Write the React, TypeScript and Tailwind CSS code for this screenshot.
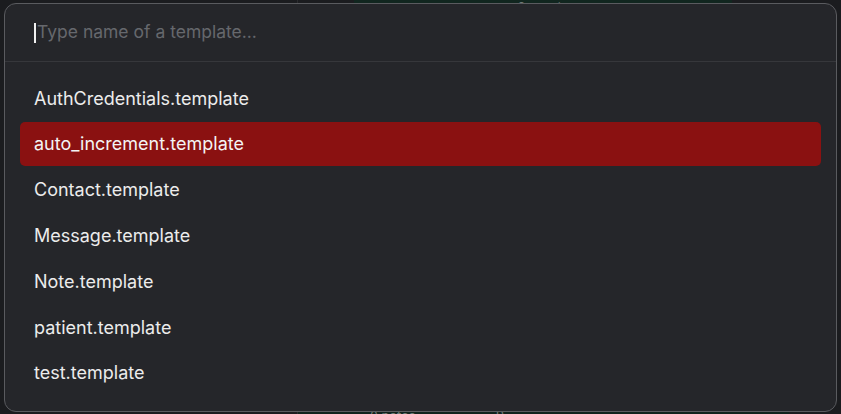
const templates = [
  "AuthCredentials.template",
  "auto_increment.template",
  "Contact.template",
  "Message.template",
  "Note.template",
  "patient.template",
  "test.template",
];

const activeIndex = 1;

export default function App() {
  return (
    <div
      className="relative h-[414px] w-[841px] overflow-hidden bg-[#1b1c1f]"
      style={{ fontFamily: "Inter, 'Noto Sans', sans-serif" }}
    >
      {/* page behind the dialog, mostly covered */}
      <div className="flex h-full">
        <div className="w-[298px] border-r border-[#2a2b2e]" />
        <div className="flex flex-1 flex-col justify-between">
          <div className="ml-[56px] flex h-[8px] w-[378px] items-end justify-center bg-[#11261f] text-[13px] leading-none text-[#6f7a76]">
            <span className="-mb-[6px]">2 assets</span>
          </div>
          <div className="flex h-[8px] w-[491px] items-start gap-[80px] bg-[#10231d] pl-[72px] text-[13px] leading-none text-[#6f7a76]">
            <span className="mt-[4px]">2 notes</span>
            <span className="mt-[4px]">B</span>
          </div>
        </div>
      </div>

      <div className="absolute left-[4px] top-[3px] flex h-[409px] w-[833px] flex-col rounded-[12px] border border-[#5a5b5f] bg-[#25262a]">
        <div className="flex h-[58px] items-center border-b border-[#36373b] px-[29px]">
          <span className="mr-[1px] h-[20px] w-[2px] bg-[#f0f0f0]" />
          <span className="text-[17.5px] text-[#66686d]">Type name of a template...</span>
        </div>
        <ul className="flex flex-col gap-[1.4px] px-[15px] pt-[14px]">
          {templates.map((name, i) => (
            <li
              key={name}
              className={
                i === activeIndex
                  ? "flex h-[44.4px] items-center rounded-[5px] bg-[#8a1111] px-[14px] text-[18px] text-[#f4f4f4]"
                  : "flex h-[44.4px] items-center rounded-[5px] px-[14px] text-[18px] text-[#ececec]"
              }
            >
              {name}
            </li>
          ))}
        </ul>
      </div>
    </div>
  );
}
